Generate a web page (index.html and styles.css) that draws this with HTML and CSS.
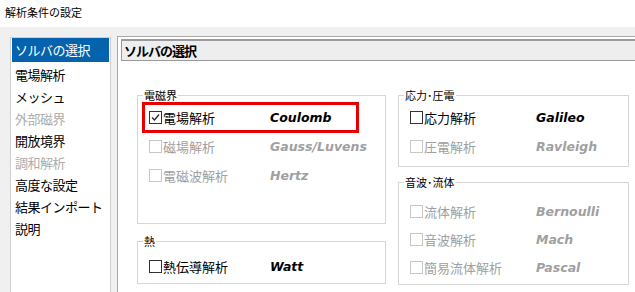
FILE: index.html
```html
<!DOCTYPE html>
<html lang="ja">
<head>
    <meta charset="UTF-8">
    <meta name="viewport" content="width=device-width, initial-scale=1.0">
    <title>解析条件の設定</title>

    <link rel="stylesheet" href="styles.css">
</head>

<body>
    <div class="titlebar">解析条件の設定</div>

    <div class="main">
        <ul class="nav">
            <li class="nav-item selected">ソルバの選択</li>
            <li class="nav-item first">電場解析</li>
            <li class="nav-item">メッシュ</li>
            <li class="nav-item disabled">外部磁界</li>
            <li class="nav-item">開放境界</li>
            <li class="nav-item disabled">調和解析</li>
            <li class="nav-item">高度な設定</li>
            <li class="nav-item">結果インポート</li>
            <li class="nav-item">説明</li>
        </ul>

        <div class="panel">
            <div class="panel-header">ソルバの選択</div>

            <div class="groups">
                <!-- left column -->
                <div class="col col-left">
                    <fieldset class="group group-em">
                        <legend>電磁界</legend>
                        <div class="row highlight">
                            <span class="option">
                                <span class="check">
                                    <svg width="11" height="11" viewBox="0 0 11 11"><path d="M2 5.5 L4.5 8 L9 2.5" fill="none" stroke="#222" stroke-width="1.2"/></svg>
                                </span>
                                <span class="label">電場解析</span>
                            </span>
                            <span class="solver">Coulomb</span>
                        </div>
                        <div class="row disabled">
                            <span class="option"><span class="check"></span><span class="label">磁場解析</span></span>
                            <span class="solver">Gauss/Luvens</span>
                        </div>
                        <div class="row disabled">
                            <span class="option"><span class="check"></span><span class="label">電磁波解析</span></span>
                            <span class="solver">Hertz</span>
                        </div>
                    </fieldset>

                    <fieldset class="group group-heat">
                        <legend>熱</legend>
                        <div class="row">
                            <span class="option"><span class="check"></span><span class="label">熱伝導解析</span></span>
                            <span class="solver">Watt</span>
                        </div>
                    </fieldset>
                </div>

                <!-- right column -->
                <div class="col col-right">
                    <fieldset class="group group-stress">
                        <legend>応力･圧電</legend>
                        <div class="row">
                            <span class="option"><span class="check"></span><span class="label">応力解析</span></span>
                            <span class="solver">Galileo</span>
                        </div>
                        <div class="row disabled">
                            <span class="option"><span class="check"></span><span class="label">圧電解析</span></span>
                            <span class="solver">Ravleigh</span>
                        </div>
                    </fieldset>

                    <fieldset class="group group-fluid">
                        <legend>音波･流体</legend>
                        <div class="row short disabled">
                            <span class="option"><span class="check"></span><span class="label">流体解析</span></span>
                            <span class="solver">Bernoulli</span>
                        </div>
                        <div class="row short disabled">
                            <span class="option"><span class="check"></span><span class="label">音波解析</span></span>
                            <span class="solver">Mach</span>
                        </div>
                        <div class="row short disabled">
                            <span class="option"><span class="check"></span><span class="label">簡易流体解析</span></span>
                            <span class="solver">Pascal</span>
                        </div>
                    </fieldset>
                </div>
            </div>
        </div>
    </div>
</body>
</html>
```

FILE: styles.css
```css
body {
    margin: 0;
    height: 100vh;
    overflow: hidden;
    display: flex;
    flex-direction: column;
    font-family: "Noto Sans CJK JP", "Liberation Sans", sans-serif;
    font-size: 13px;
    color: #000;
    background-color: #ffffff;
}

.titlebar {
    height: 27px;
    line-height: 24px;
    padding-left: 5px;
    font-size: 11px;
    box-sizing: border-box;
}

.main {
    flex: 1;
    display: flex;
    gap: 6px;
    padding: 9px 0 0 10px;
    background-color: #f0f0f0;
}

/* navigation list */
.nav {
    width: 101px;
    margin: 1px 0 0 0;
    padding: 0 1px;
    list-style: none;
    background-color: #ffffff;
    border: 1px solid #cfcfcf;
    border-bottom: none;
    box-sizing: border-box;
}

.nav-item {
    height: 22px;
    line-height: 22px;
    padding-left: 3px;
    font-size: 13px;
    letter-spacing: -0.5px;
    white-space: nowrap;
}

.nav-item.selected {
    height: 24px;
    line-height: 24px;
    color: #ffffff;
    background-color: #0563ad;
}

.nav-item.first {
    margin-top: 2px;
}

.nav-item.disabled {
    color: #adadad;
}

/* right panel */
.panel {
    flex: 1;
    background-color: #ffffff;
    border-top: 1px solid #a8a8a8;
    border-left: 1px solid #a8a8a8;
}

.panel-header {
    height: 22px;
    line-height: 20px;
    margin: 2px 0 0 3px;
    padding-left: 2px;
    font-size: 13px;
    font-weight: bold;
    letter-spacing: -1px;
    background-color: #eeeeee;
    border: 1px solid #9a9a9a;
    border-top: 2px solid #9a9a9a;
    border-right: none;
    box-sizing: border-box;
}

.groups {
    display: flex;
    gap: 12px;
    padding: 27px 0 0 19px;
}

.col-left {
    width: 249px;
}

.col-right {
    width: 231px;
}

.group {
    margin: 0;
    padding: 0 0 0 5px;
    border: 1px solid #d6d6d6;
    min-width: 0;
}

.group legend {
    padding: 0 1px;
    font-size: 11px;
    line-height: 15px;
}

.group-em {
    padding-bottom: 33px;
}

.group-heat {
    margin-top: 10px;
    padding-top: 3px;
    padding-bottom: 2px;
}

.group-stress {
    padding-bottom: 5px;
}

.group-fluid {
    margin-top: 8px;
    padding-top: 7px;
    padding-bottom: 3px;
}

/* option rows */
.row {
    display: flex;
    align-items: center;
    height: 29px;
    padding-left: 6px;
    box-sizing: border-box;
}

.row.short {
    height: 28px;
}

.row.highlight {
    width: 215px;
    outline: 3px solid #e80000;
    outline-offset: -2px;
}

.option {
    display: flex;
    align-items: center;
    width: 121px;
    flex-shrink: 0;
}

.col-right .option {
    width: 126px;
}

.check {
    width: 13px;
    height: 13px;
    margin-right: 1px;
    border: 1px solid #333;
    box-sizing: border-box;
    display: flex;
    align-items: center;
    justify-content: center;
    background-color: #ffffff;
}

.label {
    font-size: 13px;
    white-space: nowrap;
}

.solver {
    font-family: "DejaVu Sans", sans-serif;
    font-size: 12.5px;
    font-weight: bold;
    font-style: italic;
    white-space: nowrap;
}

.row.disabled {
    color: #a0a0a0;
}

.row.disabled .check {
    border-color: #c8c8c8;
}
```
